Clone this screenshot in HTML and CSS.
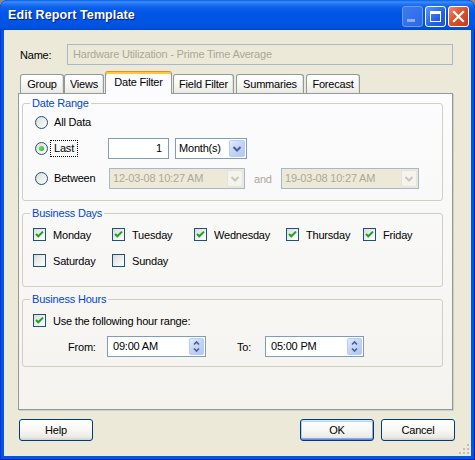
FILE: index.html
```html
<!DOCTYPE html>
<html>
<head>
<meta charset="utf-8">
<link rel="stylesheet" href="styles.css">
</head>
<body>
<div class="window">
  <div class="titlebar">
    <span class="title">Edit Report Template</span>
    <div class="tb-buttons">
      <span class="tbtn min"><svg width="19" height="19" viewBox="0 0 19 19"><rect x="4" y="12" width="8" height="3" fill="#8eabf0"/></svg></span>
      <span class="tbtn max"><svg width="19" height="19" viewBox="0 0 19 19"><rect x="4.5" y="4.5" width="10" height="10" fill="none" stroke="#fff" stroke-width="1"/><rect x="4" y="4" width="11" height="3" fill="#fff"/></svg></span>
      <span class="tbtn close"><svg width="19" height="19" viewBox="0 0 19 19"><path d="M5 5 L14 14 M14 5 L5 14" stroke="#fff" stroke-width="2.2" stroke-linecap="square"/></svg></span>
    </div>
  </div>
  <div class="client">
    <div class="name-row">
      <span class="name-label">Name:</span>
      <div class="textbox">Hardware Utilization - Prime Time Average</div>
    </div>
    <div class="tabs">
      <span class="tab t-group">Group</span>
      <span class="tab t-views">Views</span>
      <span class="tab sel t-date">Date Filter</span>
      <span class="tab t-field">Field Filter</span>
      <span class="tab t-summ">Summaries</span>
      <span class="tab t-fore">Forecast</span>
    </div>
    <div class="panel">
      <fieldset class="group first">
        <legend>Date Range</legend>
        <div class="gbody range">
          <div class="row">
            <span class="opt"><span class="radio"></span><span class="lbl">All Data</span></span>
          </div>
          <div class="row r2">
            <span class="opt w73"><span class="radio on"><span class="dot"></span></span><span class="lbl focus">Last</span></span>
            <span class="edit num">1</span>
            <span class="combo c-month"><span class="ctext">Month(s)</span><span class="dd"><svg width="14" height="15" viewBox="0 0 14 15"><path d="M3.5 6 L7 9.5 L10.5 6" fill="none" stroke="#4d6185" stroke-width="2"/></svg></span></span>
          </div>
          <div class="row r3">
            <span class="opt w74"><span class="radio"></span><span class="lbl">Between</span></span>
            <span class="combo dis c-date1"><span class="ctext">12-03-08 10:27 AM</span><span class="dd"><svg width="14" height="17" viewBox="0 0 14 17"><path d="M3.5 7 L7 10.5 L10.5 7" fill="none" stroke="#c9c7ba" stroke-width="2"/></svg></span></span>
            <span class="and">and</span>
            <span class="combo dis c-date2"><span class="ctext">19-03-08 10:27 AM</span><span class="dd"><svg width="14" height="17" viewBox="0 0 14 17"><path d="M3.5 7 L7 10.5 L10.5 7" fill="none" stroke="#c9c7ba" stroke-width="2"/></svg></span></span>
          </div>
        </div>
      </fieldset>
      <fieldset class="group">
        <legend>Business Days</legend>
        <div class="gbody days">
          <span class="chk"><span class="cb"><svg width="11" height="11" viewBox="0 0 11 11"><path d="M2 5 L4.3 7.3 L9 2.6" fill="none" stroke="#21a121" stroke-width="2"/></svg></span><span class="clbl">Monday</span></span>
          <span class="chk"><span class="cb"><svg width="11" height="11" viewBox="0 0 11 11"><path d="M2 5 L4.3 7.3 L9 2.6" fill="none" stroke="#21a121" stroke-width="2"/></svg></span><span class="clbl">Tuesday</span></span>
          <span class="chk"><span class="cb"><svg width="11" height="11" viewBox="0 0 11 11"><path d="M2 5 L4.3 7.3 L9 2.6" fill="none" stroke="#21a121" stroke-width="2"/></svg></span><span class="clbl">Wednesday</span></span>
          <span class="chk"><span class="cb"><svg width="11" height="11" viewBox="0 0 11 11"><path d="M2 5 L4.3 7.3 L9 2.6" fill="none" stroke="#21a121" stroke-width="2"/></svg></span><span class="clbl">Thursday</span></span>
          <span class="chk"><span class="cb"><svg width="11" height="11" viewBox="0 0 11 11"><path d="M2 5 L4.3 7.3 L9 2.6" fill="none" stroke="#21a121" stroke-width="2"/></svg></span><span class="clbl">Friday</span></span>
          <span class="chk"><span class="cb"></span><span class="clbl">Saturday</span></span>
          <span class="chk"><span class="cb"></span><span class="clbl">Sunday</span></span>
        </div>
      </fieldset>
      <fieldset class="group">
        <legend>Business Hours</legend>
        <div class="gbody hours">
          <div class="row">
            <span class="chk"><span class="cb"><svg width="11" height="11" viewBox="0 0 11 11"><path d="M2 5 L4.3 7.3 L9 2.6" fill="none" stroke="#21a121" stroke-width="2"/></svg></span><span class="clbl">Use the following hour range:</span></span>
          </div>
          <div class="row r-time">
            <span class="from-lbl">From:</span>
            <span class="edit time"><span class="ttext">09:00 AM</span><span class="spin"><svg width="13" height="15" viewBox="0 0 13 15"><path d="M4 5.5 L6.5 3 L9 5.5 M4 9.5 L6.5 12 L9 9.5" fill="none" stroke="#4d6185" stroke-width="1.6"/></svg></span></span>
            <span class="to-lbl">To:</span>
            <span class="edit time"><span class="ttext">05:00 PM</span><span class="spin"><svg width="13" height="15" viewBox="0 0 13 15"><path d="M4 5.5 L6.5 3 L9 5.5 M4 9.5 L6.5 12 L9 9.5" fill="none" stroke="#4d6185" stroke-width="1.6"/></svg></span></span>
          </div>
        </div>
      </fieldset>
    </div>
    <div class="btnrow">
      <span class="btn">Help</span>
      <div class="right">
        <span class="btn default">OK</span>
        <span class="btn">Cancel</span>
      </div>
    </div>
    <span class="grip"><svg width="12" height="12" viewBox="0 0 12 12">
      <rect x="9" y="1" width="2" height="2" fill="#c2bfb0"/>
      <rect x="5" y="5" width="2" height="2" fill="#c2bfb0"/>
      <rect x="9" y="5" width="2" height="2" fill="#c2bfb0"/>
      <rect x="1" y="9" width="2" height="2" fill="#c2bfb0"/>
      <rect x="5" y="9" width="2" height="2" fill="#c2bfb0"/>
      <rect x="9" y="9" width="2" height="2" fill="#c2bfb0"/>
    </svg></span>
  </div>
</div>
</body>
</html>
```
FILE: styles.css
```css
* { box-sizing: border-box; }
html, body { margin: 0; padding: 0; }
body {
  background: #8a8a8a;
  font-family: "Liberation Sans", Arial, sans-serif;
  font-size: 11px;
  letter-spacing: -0.2px;
  color: #000;
}
.window {
  width: 475px;
  height: 460px;
  background: #0055e5;
  border-radius: 8px 8px 0 0;
  overflow: hidden;
  display: flex;
  flex-direction: column;
  box-shadow: inset 1px 0 0 #0831d9, inset -1px 0 0 #001ea0, inset 0 -1px 0 #001ea0;
}
.titlebar {
  height: 30px;
  flex: none;
  display: flex;
  align-items: flex-start;
  border-radius: 8px 8px 0 0;
  background: linear-gradient(to bottom, #0a5de8 0px, #3d8ff8 2px, #2274f4 4px, #0a5ee9 8px, #0055e5 14px, #0054e3 24px, #0050dc 28px, #0046cc 30px);
}
.title {
  margin: 8px 0 0 8px;
  color: #fff;
  font-weight: bold;
  font-size: 12.5px;
  letter-spacing: 0.1px;
  line-height: 15px;
  text-shadow: 1px 1px 0 #0a1883;
}
.tb-buttons {
  margin: 6px 6px 0 auto;
  display: flex;
  gap: 2px;
}
.tbtn {
  width: 21px;
  height: 21px;
  border: 1px solid #fff;
  border-radius: 3px;
  display: flex;
  align-items: center;
  justify-content: center;
}
.tbtn.min {
  border-color: #6f98ee;
  background: linear-gradient(135deg, #3b7cf0, #2c69e6);
}
.tbtn.max {
  background: linear-gradient(135deg, #5d97fb, #2461e4 60%, #1b55d8);
}
.tbtn.close {
  background: linear-gradient(135deg, #ec8a6c, #dc532f 45%, #c8381b);
}
.client {
  margin: 0 4px;
  height: 426px;
  background: #ece9d8;
  position: relative;
  display: flex;
  flex-direction: column;
}
.name-row {
  display: flex;
  align-items: center;
  margin-top: 14px;
  height: 21px;
  padding-left: 16px;
}
.name-label { width: 47px; }
.textbox {
  width: 386px;
  height: 21px;
  border: 1px solid #a9b9c9;
  background: #ece9d8;
  color: #aca899;
  padding-left: 5px;
  line-height: 19px;
}
.tabs {
  display: flex;
  align-items: flex-end;
  height: 22px;
  margin: 6px 0 0 16px;
}
.tab {
  height: 19px;
  border: 1px solid #919b9c;
  border-bottom: none;
  border-radius: 3px 3px 0 0;
  background: linear-gradient(#ffffff, #f8f8f6 45%, #efeee8 85%, #e9e8e2);
  text-align: center;
  line-height: 18px;
  box-shadow: inset -1px 0 0 #e3e1d8;
}
.tab.sel {
  height: 23px;
  margin-bottom: -1px;
  background: #fcfcfe;
  border-top: 1px solid #e68b2c;
  box-shadow: inset 0 2px 0 #ffc83c;
  position: relative;
  z-index: 1;
  line-height: 19px;
  padding-top: 1px;
}
.t-group { width: 44px; }
.t-views { width: 40px; }
.t-date { width: 67px; margin-left: 1px; }
.t-field { width: 61px; margin-left: 1px; }
.t-summ { width: 68px; margin-left: 2px; }
.t-fore { width: 54px; margin-left: 2px; }

.panel {
  height: 317px;
  width: 435px;
  margin-left: 14px;
  border: 1px solid #919b9c;
  background: linear-gradient(#fcfcfe, #f4f3ee);
  padding: 2px 9px 0 3px;
  box-shadow: 1px 1px 0 #d0cebf;
}
.group {
  margin: 5px 0 0;
  padding: 0;
  border: 1px solid #d0d0bf;
  border-radius: 3px;
  min-width: 0;
}
.group.first { margin-top: 0; }
.group legend {
  margin-left: 7px;
  padding: 0 2px;
  color: #0046d5;
  line-height: 14px;
}
.gbody.range { padding: 2px 0 11px 12px; }
.gbody.days { padding: 4px 0 15px 10px; }
.gbody.hours { padding: 4px 0 9px 10px; }

.row {
  display: flex;
  align-items: center;
  height: 21px;
}
.range .r2 { margin-top: 5px; }
.range .r3 { margin-top: 9px; }
.hours .r-time { margin-top: 5px; }

.opt { display: flex; align-items: center; }
.opt.w73 { width: 73px; }
.opt.w74 { width: 74px; }
.radio {
  width: 13px;
  height: 13px;
  border: 1px solid #1c5180;
  border-radius: 50%;
  background: linear-gradient(135deg, #dcdcd7, #ffffff);
  display: flex;
  align-items: center;
  justify-content: center;
  flex: none;
}
.radio .dot {
  width: 5px;
  height: 5px;
  border-radius: 50%;
  background: radial-gradient(circle at 40% 40%, #6fe06c, #21a121);
}
.lbl {
  margin-left: 2px;
  padding: 1px 3px;
  border: 1px dotted transparent;
  line-height: 13px;
}
.lbl.focus { border-color: #000; }

.edit {
  height: 21px;
  border: 1px solid #7f9db9;
  background: #fff;
  line-height: 19px;
}
.num {
  width: 61px;
  text-align: right;
  padding-right: 6px;
}
.combo {
  height: 21px;
  border: 1px solid #7f9db9;
  background: #fff;
  display: flex;
  line-height: 19px;
}
.combo .ctext { flex: 1; padding-left: 3px; white-space: nowrap; overflow: hidden; }
.combo .dd {
  width: 16px;
  margin: 1px;
  border: 1px solid #b8cdf6;
  border-radius: 2px;
  background: linear-gradient(135deg, #e3ebfe, #c2d4fa 50%, #b1c6f6);
  display: flex;
  align-items: center;
  justify-content: center;
}
.c-month { width: 72px; margin-left: 6px; }
.combo.dis { background: #ece9d8; border-color: #a5b8c9; color: #aca899; }
.combo.dis .dd {
  background: #f4f3ee;
  border-color: #e6e4d8;
}
.c-date1 { width: 136px; }
.c-date2 { width: 138px; }
.and { color: #aca899; margin-left: 9px; width: 27px; }

.days {
  display: grid;
  grid-template-columns: 79px 82px 92px 77px auto;
  grid-auto-rows: 21px;
  row-gap: 5px;
}
.chk { display: flex; align-items: center; }
.cb {
  width: 13px;
  height: 13px;
  border: 1px solid #1c5180;
  background: linear-gradient(135deg, #dcdcd7, #ffffff);
  display: flex;
  align-items: center;
  justify-content: center;
  flex: none;
}
.clbl { margin-left: 7px; }

.from-lbl { margin-left: 35px; width: 39px; }
.to-lbl { margin-left: 31px; width: 28px; }
.time {
  width: 99px;
  display: flex;
}
.time .ttext { flex: 1; padding-left: 5px; }
.spin {
  width: 15px;
  margin: 1px;
  border: 1px solid #b8cdf6;
  border-radius: 2px;
  background: linear-gradient(135deg, #e3ebfe, #c2d4fa 50%, #b1c6f6);
  display: flex;
  align-items: center;
  justify-content: center;
}

.btnrow {
  display: flex;
  margin-top: 9px;
  padding: 0 16px 0 15px;
}
.right { margin-left: auto; display: flex; gap: 7px; }
.btn {
  width: 74px;
  height: 22px;
  border: 1px solid #003c74;
  border-radius: 3px;
  background: linear-gradient(#ffffff, #f7f7f4 50%, #ecebe6 85%, #d6d0c5);
  display: flex;
  align-items: center;
  justify-content: center;
}
.btn.default {
  box-shadow: inset 0 1px 0 #cee7ff, inset 0 -1px 0 #6982ee, inset 1px 0 0 #b5cdfa, inset -1px 0 0 #8aa5f2, inset 0 2px 0 #bcd6fd, inset 0 -2px 0 #8fa8f0;
}
.grip {
  position: absolute;
  right: 1px;
  bottom: 1px;
  width: 12px;
  height: 12px;
  display: flex;
}
```
